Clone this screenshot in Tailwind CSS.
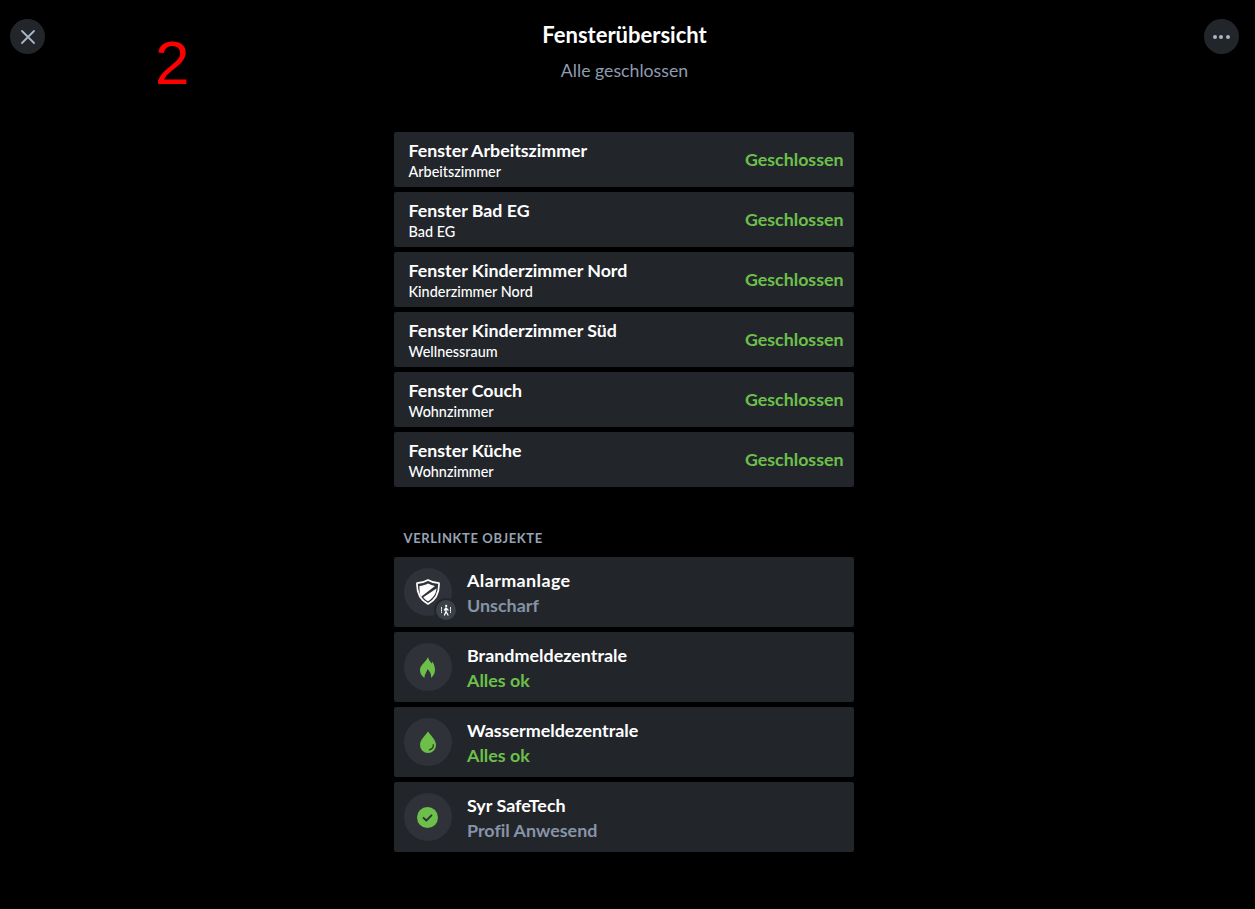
<!DOCTYPE html>
<html lang="de">

<head>
    <meta charset="UTF-8">
    <meta name="viewport" content="width=device-width, initial-scale=1.0">
    <title>Fensterübersicht</title>
    <script src="https://cdn.jsdelivr.net/npm/@tailwindcss/browser@4"></script>
</head>

<body class="bg-black font-['Lato','Open_Sans',sans-serif] [font-variant-ligatures:none] min-h-screen relative">
    <!-- annotation on top of the screenshot -->
    <span class="absolute left-[155px] top-[25px] text-[62px] leading-[76px] text-[#ff0000] font-['Liberation_Sans',sans-serif]">2</span>

    <div class="w-[1247px]">
        <header class="flex justify-between pl-[10px] pr-[8px] pt-[19px] h-[132px]">
            <button class="w-[35px] h-[35px] rounded-full bg-[#22262b] flex items-center justify-center">
                <svg width="16" height="16" viewBox="0 0 16 16" fill="none" stroke="#a9b4c4" stroke-width="1.8" stroke-linecap="round">
                    <path d="M2 2l12 12M14 2L2 14" />
                </svg>
            </button>
            <div class="text-center mt-[2px]">
                <h1 class="text-[22px] leading-[28px] font-bold text-white">Fensterübersicht</h1>
                <p class="text-[17.7px] leading-[24px] mt-[10px] text-[#8f9bb0]">Alle geschlossen</p>
            </div>
            <button class="w-[35px] h-[35px] rounded-full bg-[#22262b] flex items-center justify-center gap-[2.5px]">
                <span class="w-[4px] h-[4px] rounded-full bg-[#a9b4c4]"></span>
                <span class="w-[4px] h-[4px] rounded-full bg-[#a9b4c4]"></span>
                <span class="w-[4px] h-[4px] rounded-full bg-[#a9b4c4]"></span>
            </button>
        </header>

        <main class="w-[460px] mx-auto">
            <div class="flex flex-col gap-[5px]">
                <div class="h-[55px] bg-[#22262b] rounded-[2px] flex items-center justify-between pl-[15px] pr-[10px]">
                    <div>
                        <div class="text-[17.8px] leading-[25px] font-bold text-white">Fenster Arbeitszimmer</div>
                        <div class="text-[14.4px] leading-[18px] font-medium text-white">Arbeitszimmer</div>
                    </div>
                    <span class="text-[17.8px] font-bold text-[#6cc04a]">Geschlossen</span>
                </div>
                <div class="h-[55px] bg-[#22262b] rounded-[2px] flex items-center justify-between pl-[15px] pr-[10px]">
                    <div>
                        <div class="text-[17.8px] leading-[25px] font-bold text-white">Fenster Bad EG</div>
                        <div class="text-[14.4px] leading-[18px] font-medium text-white">Bad EG</div>
                    </div>
                    <span class="text-[17.8px] font-bold text-[#6cc04a]">Geschlossen</span>
                </div>
                <div class="h-[55px] bg-[#22262b] rounded-[2px] flex items-center justify-between pl-[15px] pr-[10px]">
                    <div>
                        <div class="text-[17.8px] leading-[25px] font-bold text-white">Fenster Kinderzimmer Nord</div>
                        <div class="text-[14.4px] leading-[18px] font-medium text-white">Kinderzimmer Nord</div>
                    </div>
                    <span class="text-[17.8px] font-bold text-[#6cc04a]">Geschlossen</span>
                </div>
                <div class="h-[55px] bg-[#22262b] rounded-[2px] flex items-center justify-between pl-[15px] pr-[10px]">
                    <div>
                        <div class="text-[17.8px] leading-[25px] font-bold text-white">Fenster Kinderzimmer Süd</div>
                        <div class="text-[14.4px] leading-[18px] font-medium text-white">Wellnessraum</div>
                    </div>
                    <span class="text-[17.8px] font-bold text-[#6cc04a]">Geschlossen</span>
                </div>
                <div class="h-[55px] bg-[#22262b] rounded-[2px] flex items-center justify-between pl-[15px] pr-[10px]">
                    <div>
                        <div class="text-[17.8px] leading-[25px] font-bold text-white">Fenster Couch</div>
                        <div class="text-[14.4px] leading-[18px] font-medium text-white">Wohnzimmer</div>
                    </div>
                    <span class="text-[17.8px] font-bold text-[#6cc04a]">Geschlossen</span>
                </div>
                <div class="h-[55px] bg-[#22262b] rounded-[2px] flex items-center justify-between pl-[15px] pr-[10px]">
                    <div>
                        <div class="text-[17.8px] leading-[25px] font-bold text-white">Fenster Küche</div>
                        <div class="text-[14.4px] leading-[18px] font-medium text-white">Wohnzimmer</div>
                    </div>
                    <span class="text-[17.8px] font-bold text-[#6cc04a]">Geschlossen</span>
                </div>
            </div>

            <h2 class="mt-[42px] mb-[10px] pl-[10px] text-[13px] leading-[18px] font-bold tracking-[0.6px] text-[#97a3b3]">VERLINKTE OBJEKTE</h2>

            <div class="flex flex-col gap-[5px]">
                <div class="h-[70px] bg-[#22262b] rounded-[2px] flex items-center pl-[10px] gap-[15px]">
                    <div class="relative w-[48px] h-[48px] rounded-full bg-[#2f3238] flex items-center justify-center">
                        <svg width="24" height="26" viewBox="0 0 24 26">
                            <path d="M12 1c3.200 1.900 6.800 2.900 11 3.200.3 9-2.700 16.300-11 20.800C3.700 20.500.7 13.200 1 4.200 5.200 3.900 8.800 2.900 12 1z" fill="none" stroke="#fff" stroke-width="1.700" stroke-linejoin="round" />
                            <path d="M12 4.500c2.300 1.200 4.500 2 7 2.400L4.800 18C3.700 15 3.400 11 3.500 7 6.800 6.700 9.500 5.800 12 4.500z" fill="#fff" />
                            <path d="M20.500 9.500c-.5 5-3 9.500-8.500 12.800-2-1.200-3.500-2.500-4.700-4.100z" fill="#fff" />
                        </svg>
                        <div class="absolute right-[-4px] bottom-[-4px] w-[20px] h-[20px] rounded-full bg-[#3c4047] border-2 border-[#22262b] box-content -m-[2px] flex items-center justify-center">
                            <svg width="12" height="12" viewBox="0 0 12 12" fill="none" stroke="#fff" stroke-linecap="round" stroke-linejoin="round">
                                <circle cx="6.200" cy="1.900" r="1.100" fill="#fff" stroke="none" />
                                <path d="M6 4v3.500L4.500 11M6 7.500l2 3.500M4.500 6L6 4l2 2" stroke-width="1.300" />
                                <path d="M1.500 3.500v5M10.500 3.500v5" stroke-width="1" stroke-dasharray="1 1.200" />
                            </svg>
                        </div>
                    </div>
                    <div class="ml-[0.5px] mt-[1px]">
                        <div class="text-[17.9px] leading-[25px] font-bold tracking-[0.4px] text-white">Alarmanlage</div>
                        <div class="text-[17.9px] leading-[25px] font-bold text-[#8793a6]">Unscharf</div>
                    </div>
                </div>
                <div class="h-[70px] bg-[#22262b] rounded-[2px] flex items-center pl-[10px] gap-[15px]">
                    <div class="w-[48px] h-[48px] rounded-full bg-[#2f3238] flex items-center justify-center">
                        <svg width="15" height="21" viewBox="0 0 15 21">
                            <path d="M8 0c.5 3 2.500 4.500 3.500 6.500.5-.7.700-1.500.8-2C14 7 15 10 15 13c0 3-1.500 6-4 8 .5-3-.5-6-3.500-9-.5 3-3 5-3 9-3-2-4.500-5-4.500-8C0 8 6 5 8 0z" fill="#6cc04a" />
                        </svg>
                    </div>
                    <div class="ml-[0.5px] mt-[1px]">
                        <div class="text-[17.9px] leading-[25px] font-bold text-white">Brandmeldezentrale</div>
                        <div class="text-[17.9px] leading-[25px] font-bold text-[#6cc04a]">Alles ok</div>
                    </div>
                </div>
                <div class="h-[70px] bg-[#22262b] rounded-[2px] flex items-center pl-[10px] gap-[15px]">
                    <div class="w-[48px] h-[48px] rounded-full bg-[#2f3238] flex items-center justify-center">
                        <svg width="16" height="22" viewBox="0 0 16 22">
                            <path d="M8 0.500C10 4 16 8.500 16 14a8 8 0 0 1-16 0C0 8.500 6 4 8 .5z" fill="#6cc04a" />
                            <path d="M13.300 13.500c.2 2.700-1.500 4.800-4 5.300" fill="none" stroke="#2a3a24" stroke-width="1.200" stroke-linecap="round" />
                        </svg>
                    </div>
                    <div class="ml-[0.5px] mt-[1px]">
                        <div class="text-[17.9px] leading-[25px] font-bold text-white">Wassermeldezentrale</div>
                        <div class="text-[17.9px] leading-[25px] font-bold text-[#6cc04a]">Alles ok</div>
                    </div>
                </div>
                <div class="h-[70px] bg-[#22262b] rounded-[2px] flex items-center pl-[10px] gap-[15px]">
                    <div class="w-[48px] h-[48px] rounded-full bg-[#2f3238] flex items-center justify-center">
                        <svg width="21" height="21" viewBox="0 0 21 21">
                            <circle cx="10.500" cy="10.500" r="10.500" fill="#6cc04a" />
                            <path d="M6.500 10.800l2.800 2.700 5.200-5.200" fill="none" stroke="#2a3038" stroke-width="1.800" stroke-linecap="round" stroke-linejoin="round" />
                        </svg>
                    </div>
                    <div class="ml-[0.5px] mt-[1px]">
                        <div class="text-[17.9px] leading-[25px] font-bold text-white">Syr SafeTech</div>
                        <div class="text-[17.9px] leading-[25px] font-bold text-[#8793a6]">Profil Anwesend</div>
                    </div>
                </div>
            </div>
        </main>
    </div>
</body>

</html>
